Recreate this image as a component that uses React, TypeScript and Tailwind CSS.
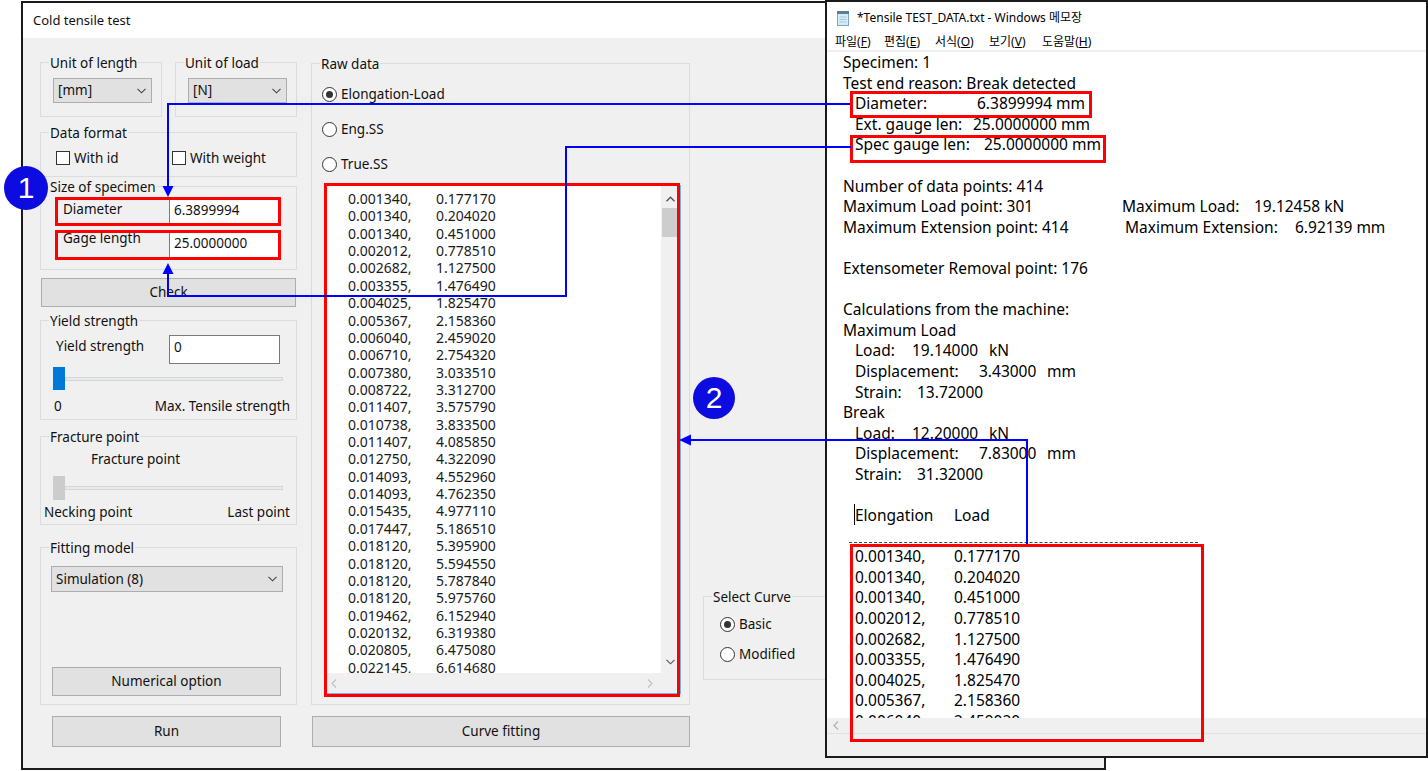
import React from "react";

const FONT = "font-['Noto_Sans','Noto_Sans_CJK_KR',sans-serif]";

const DATA: [string, string][] = [
  ["0.001340,", "0.177170"],
  ["0.001340,", "0.204020"],
  ["0.001340,", "0.451000"],
  ["0.002012,", "0.778510"],
  ["0.002682,", "1.127500"],
  ["0.003355,", "1.476490"],
  ["0.004025,", "1.825470"],
  ["0.005367,", "2.158360"],
  ["0.006040,", "2.459020"],
  ["0.006710,", "2.754320"],
  ["0.007380,", "3.033510"],
  ["0.008722,", "3.312700"],
  ["0.011407,", "3.575790"],
  ["0.010738,", "3.833500"],
  ["0.011407,", "4.085850"],
  ["0.012750,", "4.322090"],
  ["0.014093,", "4.552960"],
  ["0.014093,", "4.762350"],
  ["0.015435,", "4.977110"],
  ["0.017447,", "5.186510"],
  ["0.018120,", "5.395900"],
  ["0.018120,", "5.594550"],
  ["0.018120,", "5.787840"],
  ["0.018120,", "5.975760"],
  ["0.019462,", "6.152940"],
  ["0.020132,", "6.319380"],
  ["0.020805,", "6.475080"],
  ["0.022145,", "6.614680"],
];

function Group({
  label,
  className = "",
  children,
}: {
  label: string;
  className?: string;
  children?: React.ReactNode;
}) {
  return (
    <div className={`relative border border-[#dcdcdc] ${className}`}>
      <span className="absolute left-[8px] top-[-9px] bg-[#f0f0f0] px-[1px] leading-[18px] whitespace-nowrap">
        {label}
      </span>
      {children}
    </div>
  );
}

function ChevronDown({ color = "#444" }: { color?: string }) {
  return (
    <svg width="9" height="6" viewBox="0 0 9 6">
      <polyline points="0.5,0.8 4.5,4.8 8.5,0.8" fill="none" stroke={color} strokeWidth="1.1" />
    </svg>
  );
}

function ChevronUp({ color = "#444" }: { color?: string }) {
  return (
    <svg width="9" height="6" viewBox="0 0 9 6">
      <polyline points="0.5,5.2 4.5,1.2 8.5,5.2" fill="none" stroke={color} strokeWidth="1.4" />
    </svg>
  );
}

function ChevronLeft({ color = "#c2c2c2" }: { color?: string }) {
  return (
    <svg width="6" height="9" viewBox="0 0 6 9">
      <polyline points="5,0.5 1,4.5 5,8.5" fill="none" stroke={color} strokeWidth="1.2" />
    </svg>
  );
}

function ChevronRight({ color = "#c2c2c2" }: { color?: string }) {
  return (
    <svg width="6" height="9" viewBox="0 0 6 9">
      <polyline points="1,0.5 5,4.5 1,8.5" fill="none" stroke={color} strokeWidth="1.2" />
    </svg>
  );
}

function Combo({ text, className = "" }: { text: string; className?: string }) {
  return (
    <div
      className={`flex items-center justify-between bg-[#e1e1e1] border border-[#adadad] pl-[4px] pr-[5px] ${className}`}
    >
      <span>{text}</span>
      <ChevronDown />
    </div>
  );
}

function Button({ text, className = "" }: { text: string; className?: string }) {
  return (
    <div className={`flex items-center justify-center bg-[#e1e1e1] border border-[#adadad] ${className}`}>
      {text}
    </div>
  );
}

function TextBox({ text, className = "" }: { text: string; className?: string }) {
  return (
    <div className={`bg-white border border-[#7a7a7a] pl-[4px] pt-[1px] leading-[20px] ${className}`}>
      {text}
    </div>
  );
}

function CheckBox() {
  return <div className="w-[14px] h-[14px] border border-[#333] bg-white" />;
}

function Radio({ checked = false }: { checked?: boolean }) {
  return (
    <div className="w-[15px] h-[15px] rounded-full border border-[#333] bg-white flex items-center justify-center">
      {checked && <div className="w-[7px] h-[7px] rounded-full bg-[#333]" />}
    </div>
  );
}

function LeftWindow() {
  return (
    <div className="absolute left-[21px] top-[1px] w-[1085px] h-[769px] border-2 border-[#1a1a1a] bg-[#f0f0f0] flex flex-col text-[13.5px] text-[#111]">
      <div className="h-[35px] shrink-0 bg-white flex items-center pl-[10px] text-[13px]">Cold tensile test</div>
      <div className="flex pl-[17px] pt-[24px]">
        {/* Left column */}
        <div className="w-[257px] shrink-0 flex flex-col">
          <div className="flex gap-[13px]">
            <Group label="Unit of length" className="w-[122px] h-[55px] pl-[12px] pt-[15px]">
              <Combo text="[mm]" className="w-[99px] h-[25px]" />
            </Group>
            <Group label="Unit of load" className="w-[122px] h-[55px] pl-[12px] pt-[15px]">
              <Combo text="[N]" className="w-[99px] h-[25px]" />
            </Group>
          </div>

          <Group label="Data format" className="mt-[15px] h-[45px] pl-[15px] pt-[16px]">
            <div className="flex items-center leading-[18px]">
              <div className="w-[116px] flex items-center gap-[4px]">
                <CheckBox />
                <span>With id</span>
              </div>
              <div className="flex items-center gap-[4px]">
                <CheckBox />
                <span>With weight</span>
              </div>
            </div>
          </Group>

          <Group label="Size of specimen" className="mt-[9px] h-[84px] pl-[22px] pt-[11px]">
            <div className="flex">
              <div className="w-[106px] leading-[18px] mt-[2px]">Diameter</div>
              <TextBox text="6.3899994" className="w-[111px] h-[28px]" />
            </div>
            <div className="flex mt-[5px]">
              <div className="w-[106px] leading-[18px] mt-[-2px]">Gage length</div>
              <TextBox text="25.0000000" className="w-[111px] h-[28px]" />
            </div>
          </Group>

          <Button text="Check" className="mt-[8px] ml-[1px] w-[255px] h-[29px]" />

          <Group label="Yield strength" className="mt-[13px] h-[100px] pt-[14px]">
            <div className="flex pl-[15px]">
              <div className="w-[113px] leading-[18px] mt-[2px]">Yield strength</div>
              <TextBox text="0" className="w-[111px] h-[29px]" />
            </div>
            <div className="flex items-center pl-[12px] mt-[3px]">
              <div className="w-[12px] h-[23px] bg-[#0078d7]" />
              <div className="w-[218px] h-[4px] bg-[#e7eaea] border border-[#d6d6d6]" />
            </div>
            <div className="flex justify-between pl-[13px] pr-[6px] mt-[7px] leading-[18px]">
              <span>0</span>
              <span>Max. Tensile strength</span>
            </div>
          </Group>

          <Group label="Fracture point" className="mt-[16px] h-[89px] pt-[13px]">
            <div className="pl-[50px] leading-[18px]">Fracture point</div>
            <div className="flex items-center pl-[12px] mt-[8px]">
              <div className="w-[12px] h-[24px] bg-[#cccccc]" />
              <div className="w-[218px] h-[4px] bg-[#e7eaea] border border-[#d6d6d6]" />
            </div>
            <div className="flex justify-between pl-[3px] pr-[6px] mt-[3px] leading-[18px]">
              <span>Necking point</span>
              <span>Last point</span>
            </div>
          </Group>

          <Group label="Fitting model" className="mt-[22px] h-[158px] pl-[10px] pt-[18px]">
            <Combo text="Simulation (8)" className="w-[232px] h-[26px]" />
            <Button text="Numerical option" className="mt-[75px] ml-[1px] w-[229px] h-[29px]" />
          </Group>

          <Button text="Run" className="mt-[11px] ml-[12px] w-[229px] h-[31px]" />
        </div>

        {/* Middle column */}
        <div className="ml-[14px] w-[379px] shrink-0 flex flex-col">
          <Group label="Raw data" className="mt-[1px] h-[642px] pt-[21px]">
            <div className="flex flex-col gap-[17px] pl-[10px]">
              <div className="h-[18px] flex items-center gap-[4px]">
                <Radio checked />
                <span>Elongation-Load</span>
              </div>
              <div className="h-[18px] flex items-center gap-[4px]">
                <Radio />
                <span>Eng.SS</span>
              </div>
              <div className="h-[18px] flex items-center gap-[4px]">
                <Radio />
                <span>True.SS</span>
              </div>
            </div>
            <div className="mt-[12px] ml-[12px] w-[357px] h-[509px] border border-[#7ab3e6] flex flex-col bg-white">
              <div className="h-[487px] flex">
                <div className="w-[336px] overflow-hidden pl-[23px] pt-[4px] text-[14px] leading-[17.37px] text-[#1a1a1a]">
                  {DATA.map(([a, b], i) => (
                    <div key={i} className="flex h-[17.37px]">
                      <span className="w-[88px]">{a}</span>
                      <span>{b}</span>
                    </div>
                  ))}
                </div>
                <div className="w-[19px] bg-[#f0f0f0] flex flex-col">
                  <div className="h-[22px] pt-[4px] flex items-center justify-center">
                    <ChevronUp color="#555" />
                  </div>
                  <div className="ml-[1px] w-[16px] h-[29px] bg-[#cdcdcd]" />
                  <div className="flex-1" />
                  <div className="h-[22px] flex items-center justify-center">
                    <ChevronDown color="#555" />
                  </div>
                </div>
              </div>
              <div className="h-[20px] bg-[#f0f0f0] flex items-center justify-between pl-[6px] pr-[27px]">
                <ChevronLeft />
                <ChevronRight />
              </div>
            </div>
          </Group>
          <Button text="Curve fitting" className="mt-[11px] ml-[1px] w-[378px] h-[31px]" />
        </div>

        {/* Right column */}
        <div className="ml-[13px] mt-[534px] w-[220px] shrink-0">
          <Group label="Select Curve" className="h-[84px] pl-[16px] pt-[18px]">
            <div className="flex flex-col gap-[12px]">
              <div className="h-[18px] flex items-center gap-[4px]">
                <Radio checked />
                <span>Basic</span>
              </div>
              <div className="h-[18px] flex items-center gap-[4px]">
                <Radio />
                <span>Modified</span>
              </div>
            </div>
          </Group>
        </div>
      </div>
    </div>
  );
}

function NotepadIcon() {
  return (
    <svg width="14" height="16" viewBox="0 0 14 16">
      <rect x="1.5" y="2.5" width="11" height="13" fill="#d4ecf7" stroke="#7fa9c2" />
      <rect x="1" y="1" width="12" height="3" fill="#5d7f94" />
      <line x1="3.5" y1="7" x2="10.5" y2="7" stroke="#a9c8d8" />
      <line x1="3.5" y1="9.5" x2="10.5" y2="9.5" stroke="#a9c8d8" />
      <line x1="3.5" y1="12" x2="10.5" y2="12" stroke="#a9c8d8" />
    </svg>
  );
}

function MenuItem({ label, k, w }: { label: string; k: string; w: string }) {
  return (
    <span className={`${w} whitespace-nowrap`}>
      {label}(<span className="underline">{k}</span>)
    </span>
  );
}

function Row({ children }: { children?: React.ReactNode }) {
  return <div className="h-[20.6px] whitespace-pre flex">{children}</div>;
}

function Notepad() {
  return (
    <div className="absolute left-[825px] top-0 w-[603px] h-[758px] border-2 border-[#1a1a1a] bg-white flex flex-col text-black">
      <div className="h-[32px] shrink-0 flex items-center pl-[9px] gap-[7px] text-[12px]">
        <NotepadIcon />
        <span>*Tensile TEST_DATA.txt - Windows 메모장</span>
      </div>
      <div className="h-[16px] shrink-0 flex items-center pl-[8px] text-[12px] leading-[16px]">
        <MenuItem label="파일" k="F" w="w-[49px]" />
        <MenuItem label="편집" k="E" w="w-[51px]" />
        <MenuItem label="서식" k="O" w="w-[54px]" />
        <MenuItem label="보기" k="V" w="w-[53px]" />
        <MenuItem label="도움말" k="H" w="w-[70px]" />
      </div>
      <div className="h-[2px] shrink-0 bg-[#f0f0f0]" />
      <div className="flex-1 overflow-hidden pl-[16px] text-[15.5px] leading-[20.6px]">
        <Row>Specimen: 1</Row>
        <Row>Test end reason: Break detected</Row>
        <Row>
          <span className="ml-[12px] w-[122px]">Diameter:</span>
          <span>6.3899994 mm</span>
        </Row>
        <Row>
          <span className="ml-[12px] w-[118px]">Ext. gauge len:</span>
          <span>25.0000000 mm</span>
        </Row>
        <Row>
          <span className="ml-[12px] w-[129px]">Spec gauge len:</span>
          <span>25.0000000 mm</span>
        </Row>
        <Row />
        <Row>Number of data points: 414</Row>
        <Row>
          <span className="w-[279px]">Maximum Load point: 301</span>
          <span className="w-[132px]">Maximum Load:</span>
          <span>19.12458 kN</span>
        </Row>
        <Row>
          <span className="w-[282px]">Maximum Extension point: 414</span>
          <span className="w-[170px]">Maximum Extension:</span>
          <span>6.92139 mm</span>
        </Row>
        <Row />
        <Row>Extensometer Removal point: 176</Row>
        <Row />
        <Row>Calculations from the machine:</Row>
        <Row>Maximum Load</Row>
        <Row>
          <span className="ml-[12px] w-[57px]">Load:</span>
          <span className="w-[77px]">19.14000</span>
          <span>kN</span>
        </Row>
        <Row>
          <span className="ml-[12px] w-[124px]">Displacement:</span>
          <span className="w-[68px]">3.43000</span>
          <span>mm</span>
        </Row>
        <Row>
          <span className="ml-[12px] w-[62px]">Strain:</span>
          <span>13.72000</span>
        </Row>
        <Row>Break</Row>
        <Row>
          <span className="ml-[12px] w-[57px]">Load:</span>
          <span className="w-[77px]">12.20000</span>
          <span>kN</span>
        </Row>
        <Row>
          <span className="ml-[12px] w-[124px]">Displacement:</span>
          <span className="w-[68px]">7.83000</span>
          <span>mm</span>
        </Row>
        <Row>
          <span className="ml-[12px] w-[62px]">Strain:</span>
          <span>31.32000</span>
        </Row>
        <Row />
        <Row>
          <span className="ml-[11px] w-[1px] h-[21px] mt-[-1px] bg-black" />
          <span className="w-[99px]">Elongation</span>
          <span>Load</span>
        </Row>
        <Row>
          <div className="ml-[6px] w-[349px] h-[17px] border-b border-dashed border-[#444]" />
        </Row>
        {DATA.slice(0, 9).map(([a, b], i) => (
          <Row key={i}>
            <span className="ml-[12px] w-[99px]">{a}</span>
            <span>{b}</span>
          </Row>
        ))}
      </div>
      <div className="h-[15px] shrink-0 bg-[#f0f0f0] flex items-center pl-[6px]">
        <ChevronLeft color="#b0b0b0" />
      </div>
      <div className="h-[23px] shrink-0 bg-[#f0f0f0] border-t border-[#e2e2e2]" />
    </div>
  );
}

function Overlay() {
  return (
    <>
      <svg className="absolute left-0 top-0 pointer-events-none" width="1428" height="771" viewBox="0 0 1428 771">
        <g fill="none" stroke="#ff0000" strokeWidth="3">
          <rect x="56.5" y="198.5" width="223" height="26" />
          <rect x="56.5" y="231.5" width="223" height="27" />
          <rect x="325.5" y="184.5" width="353" height="511" />
          <rect x="851.5" y="92.5" width="239" height="24" />
          <rect x="851.5" y="136.5" width="253" height="25" />
          <rect x="851.5" y="545.5" width="351" height="195" />
        </g>
        <g fill="none" stroke="#0000ff" strokeWidth="2">
          <polyline points="850,104 168,104 168,187" />
          <polyline points="851,147 566,147 566,296 168,296 168,273" />
          <polyline points="1027,544 1027,440 690,440" />
        </g>
        <g fill="#0000ff">
          <polygon points="162.5,186 173.5,186 168,197" />
          <polygon points="162.5,274 173.5,274 168,263" />
          <polygon points="691,434.5 691,445.5 679,440" />
        </g>
      </svg>
      <div className="absolute left-[4px] top-[166px] w-[44px] h-[44px] rounded-full bg-[#0c0ce0] flex items-center justify-center text-white text-[30px] font-['Liberation_Sans',sans-serif] leading-none">
        1
      </div>
      <div className="absolute left-[693px] top-[377px] w-[42px] h-[42px] rounded-full bg-[#0c0ce0] flex items-center justify-center text-white text-[30px] font-['Liberation_Sans',sans-serif] leading-none">
        2
      </div>
    </>
  );
}

export default function App() {
  return (
    <div className={`relative w-[1428px] h-[771px] bg-white overflow-hidden ${FONT}`}>
      <LeftWindow />
      <Notepad />
      <Overlay />
    </div>
  );
}
